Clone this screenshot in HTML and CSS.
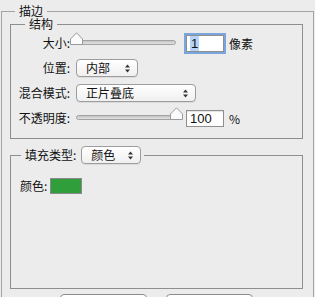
FILE: index.html
```html
<!DOCTYPE html>
<html lang="zh">
<head>
    <meta charset="UTF-8">
    <title>描边</title>
    <link rel="stylesheet" href="styles.css">
</head>
<body>
    <fieldset class="stroke">
        <legend>描边</legend>

        <fieldset class="structure">
            <legend>结构</legend>
            <div class="rows">
                <label>大小:</label>
                <div class="ctl">
                    <div class="slider slider-wide">
                        <div class="track"></div>
                        <svg class="thumb" style="left:-2px" width="13" height="13" viewBox="0 0 13 13"><path d="M0.5 12.5V7L6.5 0.8 12.5 7V12.5Z" fill="#fbfbfb" stroke="#9a9a9a"/></svg>
                    </div>
                    <div class="field focus"><span class="sel">1</span></div>
                    <span class="unit">像素</span>
                </div>

                <label>位置:</label>
                <div class="ctl">
                    <div class="select select-pos">
                        <span>内部</span>
                        <svg width="5" height="9" viewBox="0 0 5 9"><path d="M0 3.5L2.5 0.5 5 3.5Z M0 5.5L2.5 8.5 5 5.5Z" fill="#333"/></svg>
                    </div>
                </div>

                <label>混合模式:</label>
                <div class="ctl">
                    <div class="select select-blend">
                        <span>正片叠底</span>
                        <svg width="5" height="9" viewBox="0 0 5 9"><path d="M0 3.5L2.5 0.5 5 3.5Z M0 5.5L2.5 8.5 5 5.5Z" fill="#333"/></svg>
                    </div>
                </div>

                <label>不透明度:</label>
                <div class="ctl">
                    <div class="slider">
                        <div class="track"></div>
                        <svg class="thumb" style="left:94px" width="13" height="13" viewBox="0 0 13 13"><path d="M0.5 12.5V7L6.5 0.8 12.5 7V12.5Z" fill="#fbfbfb" stroke="#9a9a9a"/></svg>
                    </div>
                    <div class="field">100</div>
                    <span class="unit">%</span>
                </div>
            </div>
        </fieldset>

        <fieldset class="fill">
            <legend>
                <div class="legend-row">
                    <span>填充类型:</span>
                    <div class="select select-fill">
                        <span>颜色</span>
                        <svg width="5" height="9" viewBox="0 0 5 9"><path d="M0 3.5L2.5 0.5 5 3.5Z M0 5.5L2.5 8.5 5 5.5Z" fill="#333"/></svg>
                    </div>
                </div>
            </legend>
            <div class="fill-body">
                <div class="color-row">
                    <span>颜色:</span>
                    <div class="swatch"></div>
                </div>
            </div>
        </fieldset>

        <div class="actions">
            <div class="btn"></div>
            <div class="btn"></div>
        </div>
    </fieldset>
</body>
</html>
```

FILE: styles.css
```css
* { box-sizing: border-box; }
body { margin: 0; height: 297px; overflow: hidden; background: #ececec; color: #111; font: 12px "Noto Sans CJK SC", "Liberation Sans", sans-serif; }

fieldset { margin: 0; padding: 0; min-width: 0; border: 1px solid #8e8e8e; }
legend { padding: 0 4px; line-height: 12px; }

.stroke { margin: 5px 1px 0; padding: 0 10px 0 8px; height: 330px; border-color: #a4a4a4; }
.stroke > legend { margin-left: 5px; }

.structure { margin-top: 1px; padding: 3px 0 10px; }
.structure > legend { margin-left: 14px; }

.rows { display: grid; grid-template-columns: 59px 1fr; grid-auto-rows: 20px; row-gap: 5px; column-gap: 6px; align-items: center; }
.rows label { text-align: right; line-height: 14px; }
.ctl { display: flex; align-items: center; height: 20px; }

.slider { position: relative; align-self: flex-start; width: 100px; height: 14px; margin: -1px 10px 0 0; }
.slider-wide { width: 104px; margin-left: -4px; }
.track { height: 5px; margin-top: 8px; border: 1px solid #a2a2a2; border-radius: 3px; background: linear-gradient(#c4c4c4, #e2e2e2); }
.thumb { position: absolute; top: 0; }

.field { width: 38px; height: 17px; padding-left: 3px; border: 1px solid #8f8f8f; background: #fff; font: 13px "Liberation Sans", sans-serif; line-height: 15px; box-shadow: inset 0 1px 1px rgba(0,0,0,.12); }
.field.focus { box-shadow: 0 0 0 2px #7ba6dd; }
.sel { background: #b6d4f8; padding: 0 1px; }
.unit { margin-left: 5px; }

.select { display: flex; align-items: center; justify-content: space-between; height: 18px; padding: 0 7px 0 9px; border: 1px solid #9d9d9d; border-radius: 4px; background: linear-gradient(#ffffff, #f0f0f0); box-shadow: 0 1px 0 rgba(0,0,0,.07); line-height: 14px; }
.select svg { flex: none; }
.select-pos { width: 62px; }
.select-blend { width: 120px; }
.select-fill { width: 60px; }

.fill { margin-top: 7px; }
.fill > legend { margin-left: 10px; padding: 0 3px 0 4px; line-height: 18px; }
.legend-row { display: flex; align-items: center; gap: 5px; }
.fill-body { height: 124px; padding: 13px 0 0 9px; }
.color-row { display: flex; align-items: center; gap: 3px; }
.swatch { width: 32px; height: 16px; border: 1px solid #8a8a8a; background: #2f9e3b; }

.actions { display: flex; justify-content: center; gap: 19px; margin-top: 5px; }
.btn { width: 87px; height: 22px; border: 1px solid #8c8c8c; border-radius: 4px; background: linear-gradient(#ffffff, #f0f0f0); }
```
